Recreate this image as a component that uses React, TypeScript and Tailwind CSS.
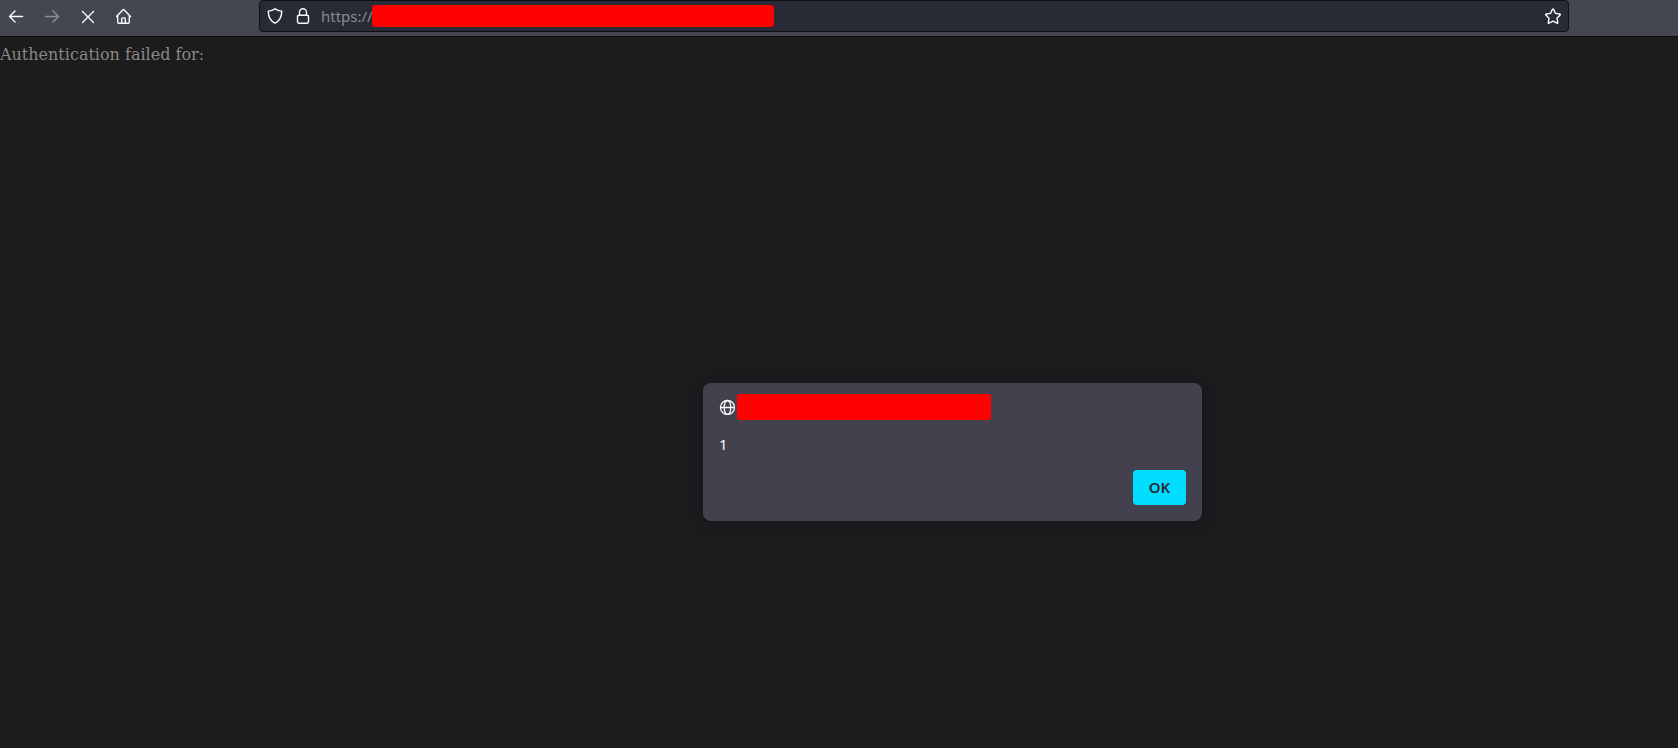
import type { ReactNode } from "react";

function Icon({ children, stroke = 1.4 }: { children: ReactNode; stroke?: number }) {
  return (
    <svg
      viewBox="0 0 16 16"
      className="block size-4 shrink-0"
      fill="none"
      stroke="currentColor"
      strokeWidth={stroke}
      strokeLinecap="round"
      strokeLinejoin="round"
      aria-hidden="true"
    >
      {children}
    </svg>
  );
}

function ToolbarButton({ label, disabled, children }: { label: string; disabled?: boolean; children: ReactNode }) {
  return (
    <button
      type="button"
      aria-label={label}
      disabled={disabled}
      className="flex size-8 items-center justify-center text-[#fbfbfe] disabled:opacity-40"
    >
      {children}
    </button>
  );
}

function Toolbar() {
  return (
    <header className="flex h-[37px] items-start border-b border-[#0c0c0d] bg-[#44474f]">
      <nav className="flex w-[259px] shrink-0 gap-1">
        <ToolbarButton label="Back">
          <Icon>
            <path d="M14.6 8.5H1.6M7 3 1.5 8.5 7 14" />
          </Icon>
        </ToolbarButton>
        <ToolbarButton label="Forward" disabled>
          <Icon>
            <path d="M1.4 8.5h13M9 3l5.5 5.500L9 14" />
          </Icon>
        </ToolbarButton>
        <ToolbarButton label="Stop">
          <Icon>
            <path d="m2.500 3.400 11 11M13.500 3.400l-11 11" />
          </Icon>
        </ToolbarButton>
        <ToolbarButton label="Home">
          <Icon>
            <path d="M.5 8.600 7 1.700a.7.7 0 0 1 1 0l6.500 6.900M1.700 7.600v6.500c0 .7.5 1.200 1.200 1.200h9.200c.7 0 1.200-.5 1.200-1.200V7.600" />
            <path d="M5.700 15v-4.100c0-.6.4-1 1-1h1.600c.6 0 1 .4 1 1V15" />
          </Icon>
        </ToolbarButton>
      </nav>
      <div className="mr-[109px] flex h-8 min-w-0 flex-1 items-center rounded border border-[#0f1014] bg-[#282a36] px-[7px] text-[#fbfbfe]">
        <Icon>
          <path d="M8 .8c1.800 1.200 4.200 2 6.700 2.300.1 5.300-1.500 9.500-6.700 12.100C2.800 12.600 1.200 8.400 1.300 3.100 3.800 2.800 6.200 2 8 .8Z" />
        </Icon>
        <span className="ml-3">
          <Icon>
            <rect x="2.500" y="7.200" width="11" height="8" rx="1.400" />
            <path d="M4.500 7V4.200a3.500 3.500 0 0 1 7 0V7" />
          </Icon>
        </span>
        <input
          aria-label="Address"
          defaultValue="https://"
          className="ml-[10px] w-[51px] bg-transparent font-['Noto_Sans',sans-serif] text-[15px] leading-5 text-[#8b8b8f] outline-none"
        />
        <span className="h-[22px] w-[402px] rounded-[3px] bg-[#ff0000]" />
        <button type="button" aria-label="Bookmark this page" className="ml-auto">
          <Icon>
            <path d="M7.500 1.200a.6.6 0 0 1 1 0l2 4.200 4.300.6c.5.100.7.600.3 1L12 10.300l.8 4.300c.1.500-.4.800-.8.600L8 13.100l-4 2.100c-.4.200-.9-.1-.8-.6l.8-4.300L.9 7c-.4-.4-.2-.9.3-1l4.300-.6Z" />
          </Icon>
        </button>
      </div>
    </header>
  );
}

function AlertDialog() {
  return (
    <div
      role="alertdialog"
      aria-label="Page message"
      className="absolute top-[383px] left-[703px] w-[499px] rounded-lg bg-[#42414d] px-4 pt-[11px] pb-4 font-['Noto_Sans',sans-serif] text-[15px] leading-5 text-[#fbfbfe] shadow-[0_2px_14px_rgba(12,12,22,0.4)]"
    >
      <div className="flex items-center gap-[2px]">
        <Icon stroke={1.3}>
          <circle cx="8.500" cy="8.500" r="7" />
          <ellipse cx="8.500" cy="8.500" rx="3.300" ry="7" />
          <path d="M1.500 8.500h14" />
        </Icon>
        <span className="h-[26px] w-[254px] rounded-[3px] bg-[#ff0000]" />
      </div>
      <p className="mt-[14px]">1</p>
      <div className="mt-4 flex justify-end">
        <button
          type="button"
          className="h-[35px] w-[53px] rounded bg-[#00ddff] pb-[2px] font-semibold text-[#2b2a33]"
        >
          OK
        </button>
      </div>
    </div>
  );
}

export default function App() {
  return (
    <div className="relative flex min-h-screen flex-col bg-[#1c1b1d]">
      <Toolbar />
      <main className="flex-1 pt-2">
        <p className="font-['DejaVu_Serif',serif] text-base leading-5 text-[#8a8785]">Authentication failed for:</p>
      </main>
      <AlertDialog />
    </div>
  );
}
